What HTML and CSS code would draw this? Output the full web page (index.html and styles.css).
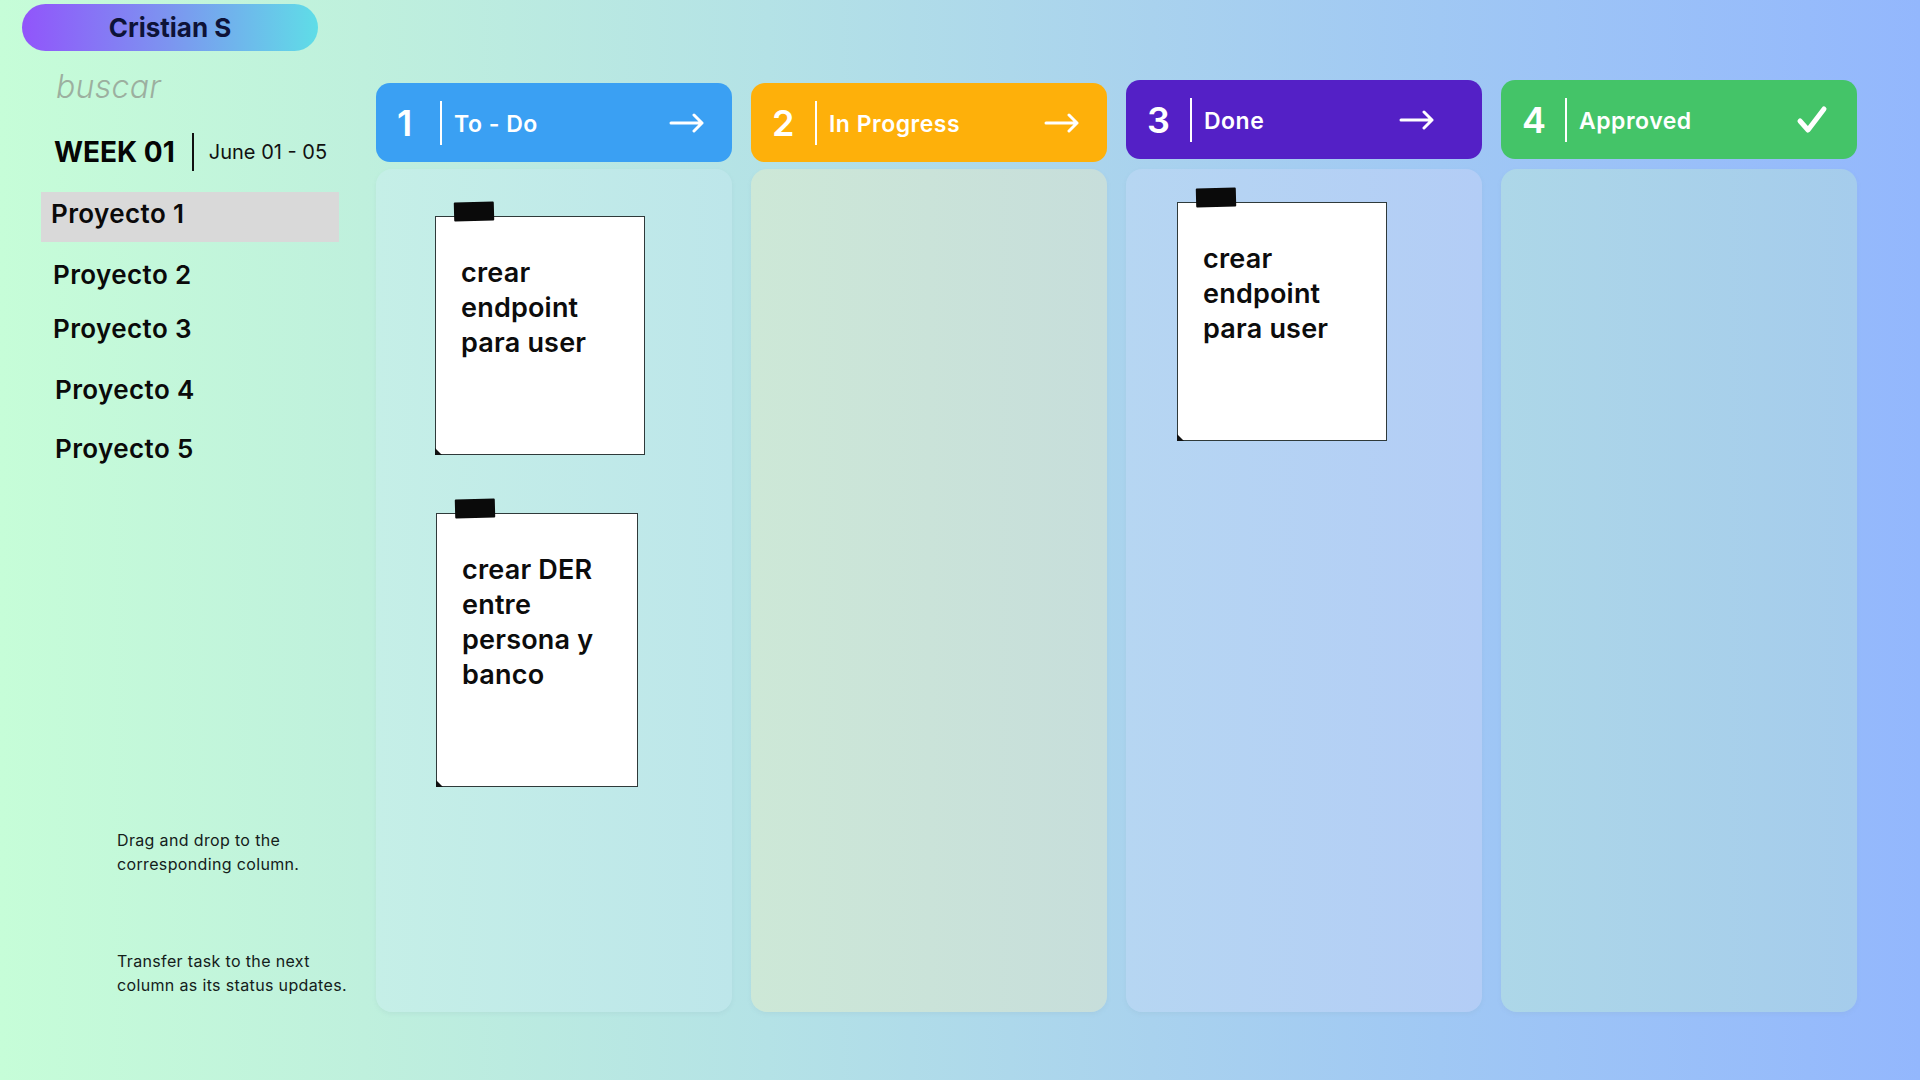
FILE: index.html
```html
<!DOCTYPE html>
<html lang="es">
<head>
<meta charset="utf-8">
<title>Kanban</title>
<link rel="stylesheet" href="styles.css">
</head>
<body>
<div class="page">
  <aside class="sidebar">
    <div class="user-pill">Cristian S</div>
    <div class="search">buscar</div>
    <div class="week">
      <span class="week-title">WEEK 01</span>
      <span class="week-sep"></span>
      <span class="week-dates">June 01 - 05</span>
    </div>
    <ul class="projects">
      <li class="project active">Proyecto 1</li>
      <li class="project">Proyecto 2</li>
      <li class="project">Proyecto 3</li>
      <li class="project">Proyecto 4</li>
      <li class="project">Proyecto 5</li>
    </ul>
    <div class="help">
      <p>Drag and drop to the<br>corresponding column.</p>
      <p>Transfer task to the next<br>column as its status updates.</p>
    </div>
  </aside>

  <main class="board">
    <section class="col col-todo">
      <header class="col-head">
        <span class="col-num">1</span><span class="col-sep"></span><span class="col-title">To - Do</span>
        <svg class="col-icon arrow" width="36" height="20" viewBox="0 0 36 20"><path d="M2 10 H33 M25 2 L33 10 L25 18" fill="none" stroke="#fff" stroke-width="3" stroke-linecap="round" stroke-linejoin="round"/></svg>
      </header>
      <div class="col-body">
        <div class="note note-a">crear<br>endpoint<br>para user</div>
        <div class="note note-b">crear DER<br>entre<br>persona y<br>banco</div>
      </div>
    </section>

    <section class="col col-progress">
      <header class="col-head">
        <span class="col-num">2</span><span class="col-sep"></span><span class="col-title">In Progress</span>
        <svg class="col-icon arrow" width="36" height="20" viewBox="0 0 36 20"><path d="M2 10 H33 M25 2 L33 10 L25 18" fill="none" stroke="#fff" stroke-width="3" stroke-linecap="round" stroke-linejoin="round"/></svg>
      </header>
      <div class="col-body"></div>
    </section>

    <section class="col col-done raised">
      <header class="col-head">
        <span class="col-num">3</span><span class="col-sep"></span><span class="col-title">Done</span>
        <svg class="col-icon arrow arrow-wide" width="36" height="20" viewBox="0 0 36 20"><path d="M2 10 H33 M25 2 L33 10 L25 18" fill="none" stroke="#fff" stroke-width="3" stroke-linecap="round" stroke-linejoin="round"/></svg>
      </header>
      <div class="col-body">
        <div class="note note-c">crear<br>endpoint<br>para user</div>
      </div>
    </section>

    <section class="col col-approved raised">
      <header class="col-head">
        <span class="col-num">4</span><span class="col-sep"></span><span class="col-title">Approved</span>
        <svg class="col-icon check" width="32" height="31" viewBox="0 0 32 31"><path d="M4 17 L12 26 L28 5" fill="none" stroke="#fff" stroke-width="5" stroke-linecap="round" stroke-linejoin="round"/></svg>
      </header>
      <div class="col-body"></div>
    </section>
  </main>
</div>
</body>
</html>
```

FILE: styles.css
```css
html, body {
  margin: 0;
  padding: 0;
}

body {
  width: 1920px;
  height: 1080px;
  overflow: hidden;
  font-family: "Inter", "Noto Sans", "Liberation Sans", sans-serif;
  background: linear-gradient(90deg, #c6fdd8 0%, #bff0dd 19%, #b4e2e6 40%, #a9d2ee 60%, #a0c8f4 75%, #93b7fd 100%);
}

.page {
  display: flex;
  height: 1080px;
}

/* ---------- Sidebar ---------- */
.sidebar {
  width: 376px;
  flex: none;
  display: flex;
  flex-direction: column;
  align-items: flex-start;
}

.user-pill {
  margin: 4px 0 0 22px;
  width: 296px;
  height: 47px;
  border-radius: 24px;
  background: linear-gradient(90deg, #9155fb 0%, #7c95f0 50%, #5fdde7 100%);
  display: flex;
  align-items: center;
  justify-content: center;
  font-weight: 700;
  font-size: 26px;
  color: #0e1338;
}

.search {
  margin: 17px 0 0 56px;
  font-style: italic;
  font-weight: 300;
  font-size: 32px;
  line-height: 38px;
  letter-spacing: 0.3px;
  color: #9caf9f;
}

.week {
  margin: 26px 0 0 54px;
  height: 40px;
  display: flex;
  align-items: center;
}

.week-title {
  font-weight: 700;
  font-size: 28px;
  line-height: 40px;
  color: #050505;
}

.week-sep {
  width: 2px;
  height: 38px;
  background: #111;
  margin-left: 17px;
}

.week-dates {
  margin-left: 15px;
  font-weight: 400;
  font-size: 20px;
  line-height: 40px;
  color: #111;
}

.projects {
  list-style: none;
  margin: 20px 0 0 0;
  padding: 0;
  width: 100%;
}

.project {
  font-weight: 600;
  font-size: 26px;
  line-height: 44px;
  letter-spacing: 0.4px;
  color: #0a0a0a;
  margin-left: 53px;
}

.project.active {
  margin-left: 41px;
  width: 298px;
  height: 50px;
  padding-left: 10px;
  box-sizing: border-box;
  background: #d9d9d9;
}

.project:nth-child(2) { margin-top: 11px; }
.project:nth-child(3) { margin-top: 10px; }
.project:nth-child(4) { margin-top: 17px; margin-left: 55px; }
.project:nth-child(5) { margin-top: 15px; margin-left: 55px; }

.help {
  margin: 357px 0 0 117px;
  font-size: 16px;
  line-height: 24px;
  letter-spacing: 0.35px;
  color: #14201a;
}

.help p {
  margin: 0;
}

.help p + p {
  margin-top: 73px;
}

/* ---------- Board ---------- */
.board {
  display: flex;
  gap: 19px;
}

.col {
  width: 356px;
  display: flex;
  flex-direction: column;
}

.col-head {
  margin-top: 83px;
  height: 79px;
  border-radius: 14px;
  display: flex;
  align-items: center;
  padding-left: 21px;
  color: #fff;
}

.col-num {
  width: 43px;
  font-weight: 600;
  font-size: 36px;
  line-height: 40px;
}

.col-sep {
  width: 2px;
  height: 44px;
  background: #fff;
  flex: none;
}

.col-title {
  margin-left: 12px;
  font-weight: 600;
  font-size: 23px;
  line-height: 30px;
  letter-spacing: 0.5px;
  margin-top: 2px;
}

.col-icon {
  margin-left: auto;
  margin-right: 27px;
  display: block;
}

.col-icon.arrow-wide {
  margin-right: 47px;
}

.col-icon.check {
  margin-right: 29px;
}

.col-body {
  margin-top: 7px;
  height: 843px;
  border-radius: 16px;
  display: flex;
  flex-direction: column;
  align-items: flex-start;
  box-shadow: 0 2px 4px rgba(120, 160, 170, 0.12);
}

.col.raised .col-head {
  margin-top: 80px;
}

.col.raised .col-body {
  margin-top: 10px;
}

.col-todo .col-head { background: #3aa0f3; }
.col-todo .col-body { background: linear-gradient(90deg, #c5efe7, #bde6ea); }

.col-progress .col-head { background: #feb00a; }
.col-progress .col-body { background: linear-gradient(90deg, #cde8d7, #c7dedb); }

.col-done .col-head { background: #5420c6; }
.col-done .col-body { background: linear-gradient(90deg, #b6d6f2, #b3cdf6); }

.col-approved .col-head { background: #44c468; }
.col-approved .col-body { background: linear-gradient(90deg, #add7e8, #a5ccec); }

/* ---------- Sticky notes ---------- */
.note {
  position: relative;
  box-sizing: border-box;
  background: #fff;
  border: 1.5px solid #2f3a3a;
  padding: 38px 0 0 25px;
  font-weight: 600;
  font-size: 27px;
  line-height: 35px;
  letter-spacing: 0.2px;
  color: #0c0c0c;
}

.note::before {
  content: "";
  position: absolute;
  left: 18px;
  top: -15px;
  width: 40px;
  height: 19px;
  background: #0a0a0a;
  border-radius: 1px;
  transform: rotate(-1.5deg);
}

.note::after {
  content: "";
  position: absolute;
  left: -1px;
  bottom: -1px;
  width: 0;
  height: 0;
  border-left: 7px solid #111;
  border-top: 7px solid transparent;
}

.note-a {
  width: 210px;
  height: 239px;
  margin: 47px 0 0 59px;
}

.note-b {
  width: 202px;
  height: 274px;
  margin: 58px 0 0 60px;
}

.note-c {
  width: 210px;
  height: 239px;
  margin: 33px 0 0 51px;
}
```
